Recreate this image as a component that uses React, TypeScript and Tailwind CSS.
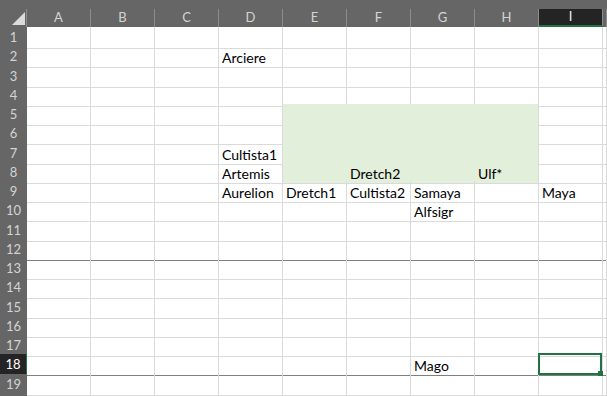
const COLS = ["A", "B", "C", "D", "E", "F", "G", "H", "I", ""];
const HEIGHTS = ["h-[19px]", "h-[20px]", "h-[19px]", "h-[19px]"];

const DATA: Record<string, string> = {
  D2: "Arciere",
  D7: "Cultista1",
  D8: "Artemis",
  F8: "Dretch2",
  H8: "Ulf*",
  D9: "Aurelion",
  E9: "Dretch1",
  F9: "Cultista2",
  G9: "Samaya",
  I9: "Maya",
  G10: "Alfsigr",
  G18: "Mago",
};

const GRID = "grid grid-cols-[27px_repeat(9,64px)_1fr]";

function inFill(c: number, r: number) {
  return c >= 4 && c <= 7 && r >= 5 && r <= 8;
}

function Cell({ c, r }: { c: number; r: number }) {
  const fill = inFill(c, r);
  const text = DATA[`${COLS[c]}${r}`];
  const selected = c === 8 && r === 18;
  const heavy = r === 12 || r === 18;

  return (
    <div
      className={[
        "relative flex items-end whitespace-nowrap border-r border-b pl-[3px] pb-[2px] text-[14px] leading-none text-black",
        fill ? "bg-[#e2efda]" : "",
        fill && c !== 7 ? "border-r-[#e2efda]" : "border-r-[#dadada]",
        heavy
          ? "border-b-[#7f7f7f]"
          : fill && r !== 8
            ? "border-b-[#e2efda]"
            : "border-b-[#dadada]",
      ].join(" ")}
    >
      {text}
      {selected && (
        <div className="absolute -left-px -top-px right-0 bottom-0 z-10 border-2 border-[#217346]">
          <div className="absolute -right-[3px] -bottom-[3px] h-[5px] w-[5px] bg-[#217346]" />
        </div>
      )}
    </div>
  );
}

export default function App() {
  const rows = Array.from({ length: 20 }, (_, i) => i + 1);

  return (
    <div className="h-[396px] w-[607px] overflow-hidden bg-white font-['Lato',sans-serif]">
      <div className={`${GRID} h-[27px] items-end bg-[#666666] pt-[9px]`}>
        <div className="h-[18px] border-r border-[#8c8c8c]">
          <svg width="26" height="18" viewBox="0 0 26 18">
            <polygon points="12,16 25,3 25,16" fill="#dcdcdc" />
          </svg>
        </div>
        {COLS.map((col) =>
          col === "I" ? (
            <div
              key={col}
              className="flex h-[18px] items-center justify-center border-r border-b-2 border-r-[#8c8c8c] border-b-[#217346] bg-[#242424] text-[13px] text-[#f0f0f0]"
            >
              {col}
            </div>
          ) : (
            <div
              key={col || "J"}
              className="flex h-[18px] items-center justify-center border-r border-[#8c8c8c] text-[13px] text-[#d4d4d4]"
            >
              {col}
            </div>
          ),
        )}
      </div>

      {rows.map((r) => (
        <div key={r} className={`${GRID} ${HEIGHTS[(r - 1) % 4]}`}>
          <div
            className={
              r === 18
                ? "flex items-center justify-center border-r border-b border-r-[#217346] border-b-[#7d7d7d] bg-[#242424] pt-[1px] text-[13px] text-white"
                : "flex items-center justify-center border-b border-[#7d7d7d] bg-[#666666] pt-[1px] text-[13px] text-[#d4d4d4]"
            }
          >
            {r < 20 ? r : null}
          </div>
          {COLS.map((_, c) => (
            <Cell key={c} c={c} r={r} />
          ))}
        </div>
      ))}
    </div>
  );
}
